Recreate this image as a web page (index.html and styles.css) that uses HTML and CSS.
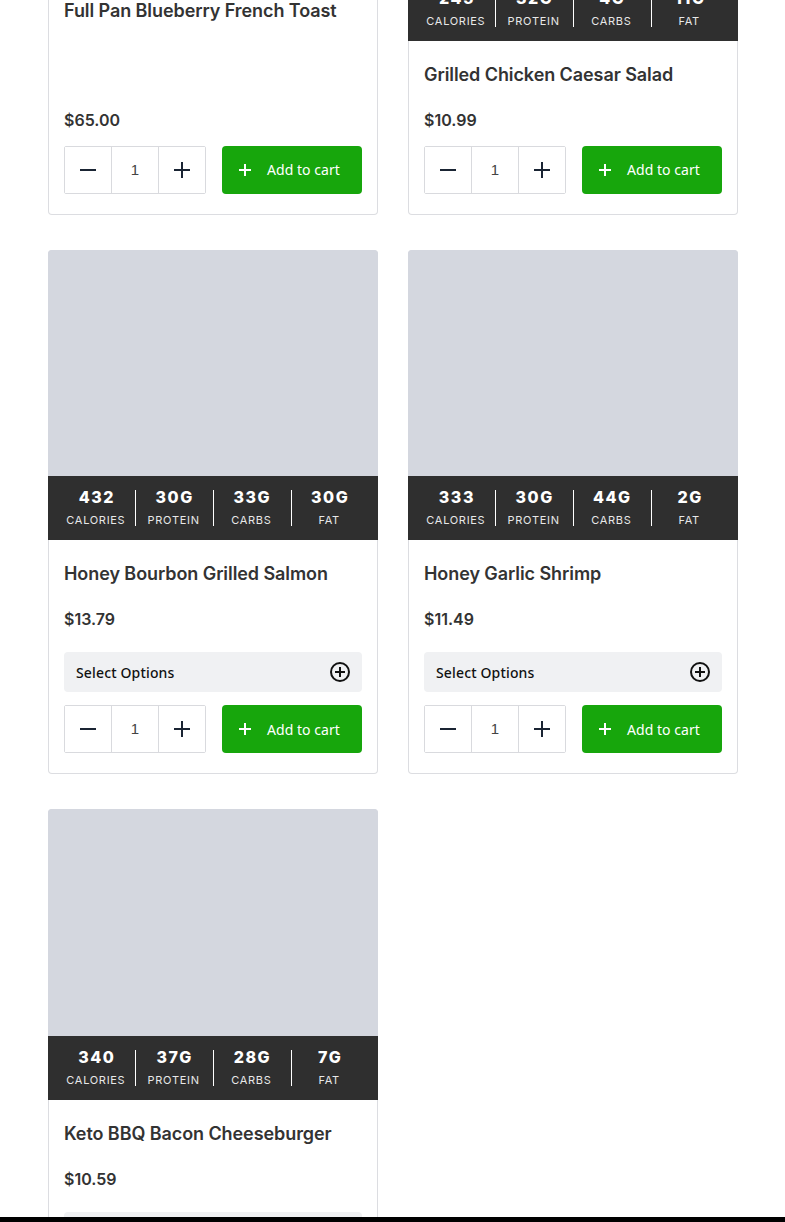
FILE: index.html
```html
<!DOCTYPE html>
<html lang="en">
<head>
  <meta charset="UTF-8" />
  <meta name="viewport" content="width=device-width, initial-scale=1.0"/>
  <title>Meals</title>
  <link rel="stylesheet" href="styles.css">
</head>
<body>
  <div class="products">

    <div class="card">
      <div class="photo"></div>
      <div class="card-body">
        <h3>Full Pan Blueberry French Toast</h3>
        <p class="price">$65.00</p>
        <div class="buy">
          <div class="qty">
            <button><svg viewBox="0 0 16 16"><path d="M0 8h16"/></svg></button>
            <span>1</span>
            <button><svg viewBox="0 0 16 16"><path d="M0 8h16M8 0v16"/></svg></button>
          </div>
          <button class="add"><svg viewBox="0 0 12 12"><path d="M0 6h12M6 0v12"/></svg>Add to cart</button>
        </div>
      </div>
    </div>

    <div class="card">
      <div class="photo"></div>
      <div class="macros">
        <div class="macro"><b>245</b><span>Calories</span></div>
        <div class="macro"><b>32G</b><span>Protein</span></div>
        <div class="macro"><b>4G</b><span>Carbs</span></div>
        <div class="macro"><b>11G</b><span>Fat</span></div>
      </div>
      <div class="card-body">
        <h3>Grilled Chicken Caesar Salad</h3>
        <p class="price">$10.99</p>
        <div class="buy">
          <div class="qty">
            <button><svg viewBox="0 0 16 16"><path d="M0 8h16"/></svg></button>
            <span>1</span>
            <button><svg viewBox="0 0 16 16"><path d="M0 8h16M8 0v16"/></svg></button>
          </div>
          <button class="add"><svg viewBox="0 0 12 12"><path d="M0 6h12M6 0v12"/></svg>Add to cart</button>
        </div>
      </div>
    </div>

    <div class="card">
      <div class="photo"></div>
      <div class="macros">
        <div class="macro"><b>432</b><span>Calories</span></div>
        <div class="macro"><b>30G</b><span>Protein</span></div>
        <div class="macro"><b>33G</b><span>Carbs</span></div>
        <div class="macro"><b>30G</b><span>Fat</span></div>
      </div>
      <div class="card-body">
        <h3>Honey Bourbon Grilled Salmon</h3>
        <p class="price">$13.79</p>
        <div class="options">Select Options
          <svg viewBox="0 0 20 20"><circle cx="10" cy="10" r="9"/><path d="M10 5v10M5 10h10"/></svg>
        </div>
        <div class="buy">
          <div class="qty">
            <button><svg viewBox="0 0 16 16"><path d="M0 8h16"/></svg></button>
            <span>1</span>
            <button><svg viewBox="0 0 16 16"><path d="M0 8h16M8 0v16"/></svg></button>
          </div>
          <button class="add"><svg viewBox="0 0 12 12"><path d="M0 6h12M6 0v12"/></svg>Add to cart</button>
        </div>
      </div>
    </div>

    <div class="card">
      <div class="photo"></div>
      <div class="macros">
        <div class="macro"><b>333</b><span>Calories</span></div>
        <div class="macro"><b>30G</b><span>Protein</span></div>
        <div class="macro"><b>44G</b><span>Carbs</span></div>
        <div class="macro"><b>2G</b><span>Fat</span></div>
      </div>
      <div class="card-body">
        <h3>Honey Garlic Shrimp</h3>
        <p class="price">$11.49</p>
        <div class="options">Select Options
          <svg viewBox="0 0 20 20"><circle cx="10" cy="10" r="9"/><path d="M10 5v10M5 10h10"/></svg>
        </div>
        <div class="buy">
          <div class="qty">
            <button><svg viewBox="0 0 16 16"><path d="M0 8h16"/></svg></button>
            <span>1</span>
            <button><svg viewBox="0 0 16 16"><path d="M0 8h16M8 0v16"/></svg></button>
          </div>
          <button class="add"><svg viewBox="0 0 12 12"><path d="M0 6h12M6 0v12"/></svg>Add to cart</button>
        </div>
      </div>
    </div>

    <div class="card">
      <div class="photo"></div>
      <div class="macros">
        <div class="macro"><b>340</b><span>Calories</span></div>
        <div class="macro"><b>37G</b><span>Protein</span></div>
        <div class="macro"><b>28G</b><span>Carbs</span></div>
        <div class="macro"><b>7G</b><span>Fat</span></div>
      </div>
      <div class="card-body">
        <h3>Keto BBQ Bacon Cheeseburger</h3>
        <p class="price">$10.59</p>
        <div class="options">Select Options
          <svg viewBox="0 0 20 20"><circle cx="10" cy="10" r="9"/><path d="M10 5v10M5 10h10"/></svg>
        </div>
        <div class="buy">
          <div class="qty">
            <button><svg viewBox="0 0 16 16"><path d="M0 8h16"/></svg></button>
            <span>1</span>
            <button><svg viewBox="0 0 16 16"><path d="M0 8h16M8 0v16"/></svg></button>
          </div>
          <button class="add"><svg viewBox="0 0 12 12"><path d="M0 6h12M6 0v12"/></svg>Add to cart</button>
        </div>
      </div>
    </div>

  </div>
  <div class="bottom-bar"></div>
</body>
</html>
```

FILE: styles.css
```css
html, body {
  height: 100%;
  overflow: hidden;
}

body {
  margin: 0;
  background: #fff;
  color: #333;
  font-family: Inter, Arial, sans-serif;
}

/* page is scrolled a bit, the first row runs off the top */
.products {
  display: grid;
  grid-template-columns: 330px 330px;
  column-gap: 30px;
  row-gap: 35px;
  margin: -249.6px 0 0 48px;
}

.card {
  display: flex;
  flex-direction: column;
  border-radius: 4px;
  box-shadow: inset 0 0 0 1px #dcdde1;
  overflow: hidden;
}

.photo {
  height: 226.4px;
  background: #d4d7df;
}

.macros {
  display: flex;
  height: 64px;
  box-sizing: border-box;
  padding: 14px 9.5px 0 10.5px;
  background: #2f2f2f;
  color: #fff;
}

.macro {
  flex: 1;
  height: 36px;
  display: flex;
  flex-direction: column;
  align-items: center;
  border-right: 1px solid #fff;
}

.macro:last-child {
  border-right: none;
}

.macro b {
  margin-top: -1px;
  font-size: 16px;
  font-weight: 800;
  line-height: 16px;
  letter-spacing: 1.5px;
}

.macro span {
  margin: 8px 2px 0 0;
  font-size: 11px;
  line-height: 14px;
  letter-spacing: 0.7px;
  text-transform: uppercase;
  color: #e8e8e8;
}

.card-body {
  flex: 1;
  display: flex;
  flex-direction: column;
  padding: 21px 16px;
}

.card-body h3 {
  margin: 0 0 21px;
  font-size: 18px;
  font-weight: 600;
  line-height: 25px;
  letter-spacing: -0.08px;
  color: #333;
}

.price {
  margin: auto 0 14px;
  font-size: 16px;
  font-weight: 600;
  line-height: 24px;
}

.options {
  display: flex;
  justify-content: space-between;
  align-items: center;
  height: 40px;
  margin: 7px 0 13px;
  padding: 0 12px;
  border-radius: 4px;
  background: #f0f1f3;
  color: #111;
  font-family: "Noto Sans", sans-serif;
  font-size: 14px;
  font-weight: 500;
  letter-spacing: 0.15px;
}

.options svg {
  width: 20px;
  height: 20px;
  fill: none;
  stroke: #111;
  stroke-width: 2;
}

.buy {
  display: flex;
  justify-content: space-between;
}

.qty {
  display: flex;
  align-items: center;
  height: 48px;
  box-sizing: border-box;
  border: 1px solid #d9dade;
  border-radius: 2px;
}

.qty button {
  width: 46px;
  height: 46px;
  padding: 0;
  border: none;
  background: #fff;
}

.qty button svg {
  width: 16px;
  height: 16px;
  display: block;
  margin: auto;
  fill: none;
  stroke: #1a2433;
  stroke-width: 2;
}

.qty span {
  width: 48px;
  height: 46px;
  box-sizing: border-box;
  border-left: 1px solid #d9dade;
  border-right: 1px solid #d9dade;
  font-family: "Liberation Sans", Arial, sans-serif;
  font-size: 15px;
  line-height: 46px;
  text-align: center;
  color: #444;
}

.add {
  display: flex;
  align-items: center;
  width: 140px;
  height: 48px;
  padding: 0 0 0 17px;
  border: none;
  border-radius: 4px;
  background: #17a60c;
  color: #fff;
  font-family: "Noto Sans", sans-serif;
  font-size: 14px;
  letter-spacing: 0.05px;
}

.add svg {
  width: 12px;
  height: 12px;
  margin-right: 16px;
  fill: none;
  stroke: #fff;
  stroke-width: 2;
}

.bottom-bar {
  position: fixed;
  left: 0;
  right: 0;
  bottom: 0;
  height: 5px;
  background: #000;
}
```
